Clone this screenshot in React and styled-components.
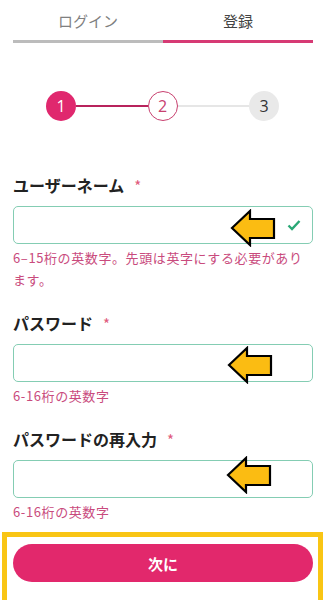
import styled, { createGlobalStyle } from "styled-components";

const GlobalStyle = createGlobalStyle`
    body {
        margin: 0;
        background: #ffffff;
        font-family: "Noto Sans CJK JP", "Noto Sans", sans-serif;
    }
`;

const Page = styled.div`
    width: 325px;
    height: 600px;
    overflow: hidden;
    display: flex;
    flex-direction: column;
`;

const Content = styled.div`
    padding: 0 12px 0 13px;
    display: flex;
    flex-direction: column;
`;

const Tabs = styled.div`
    display: grid;
    grid-template-columns: 1fr 1fr;
`;

const Tab = styled.div`
    height: 40px;
    display: flex;
    align-items: center;
    justify-content: center;
    font-size: 15px;
    color: ${(p) => (p.$active ? "#444" : "#808080")};
    border-bottom: 3px solid ${(p) => (p.$active ? "#d63a74" : "#bcbcbc")};
`;

const Stepper = styled.div`
    margin: 48px 34px 0 33px;
    display: flex;
    align-items: center;
`;

const Step = styled.div`
    width: 30px;
    height: 30px;
    flex: none;
    box-sizing: border-box;
    border-radius: 50%;
    display: flex;
    align-items: center;
    justify-content: center;
    font-family: "Open Sans", sans-serif;
    font-size: 16px;
    background: ${(p) => (p.$state === "done" ? "#e0286e" : p.$state === "current" ? "#fff" : "#e9e9e9")};
    color: ${(p) => (p.$state === "done" ? "#fff" : p.$state === "current" ? "#c8406f" : "#333")};
    border: ${(p) => (p.$state === "current" ? "1px solid #c8406f" : "none")};
`;

const StepLine = styled.div`
    flex: 1;
    height: 2px;
    background: ${(p) => (p.$active ? "#b8235c" : "#e6e6e6")};
`;

const Form = styled.div`
    margin-top: 53px;
    display: flex;
    flex-direction: column;
    gap: 21px;
`;

const Field = styled.div`
    display: flex;
    flex-direction: column;
`;

const Label = styled.div`
    font-size: 16px;
    font-weight: 700;
    line-height: 22px;
    color: #222;
    margin-bottom: 9px;

    & span {
        color: #e05a7c;
        margin-left: 10px;
        font-weight: 400;
        font-size: 15px;
    }
`;

const InputWrap = styled.div`
    position: relative;
`;

const Input = styled.input`
    box-sizing: border-box;
    width: 100%;
    height: 38px;
    border: 1px solid #84cdb3;
    border-radius: 5px;
    outline: none;
    padding: 0 30px 0 10px;
    font-size: 14px;
    background: #fff;
`;

const Check = styled.svg`
    position: absolute;
    right: 12px;
    top: 13px;
`;

const Arrow = styled.svg`
    position: absolute;
    left: ${(p) => p.$left}px;
    top: ${(p) => p.$top}px;
`;

const Help = styled.div`
    margin-top: 3px;
    font-size: 13px;
    letter-spacing: 0.6px;
    line-height: 22px;
    color: #c94b7d;
`;

const Highlight = styled.div`
    margin: 9px 2px 0 2px;
    border: 5px solid #f9c514;
    border-bottom: none;
    padding: 7px 5px 20px 6px;
`;

const NextButton = styled.button`
    width: 100%;
    height: 38px;
    border: none;
    border-radius: 19px;
    background: #e2286c;
    color: #fff;
    font-family: "Noto Sans CJK JP", sans-serif;
    font-size: 15px;
    font-weight: 700;
`;

function YellowArrow({ left, top }) {
    return (
        <Arrow $left={left} $top={top} width="46" height="38" viewBox="0 0 46 38">
            <path
                d="M2 19 L20 2 L20 10 L44 10 L44 29 L20 29 L20 36 Z"
                fill="#fbbc12"
                stroke="#000"
                strokeWidth="2.2"
                strokeLinejoin="miter"
            />
        </Arrow>
    );
}

export default function App() {
    return (
        <Page>
            <GlobalStyle />
            <Content>
                <Tabs>
                    <Tab>ログイン</Tab>
                    <Tab $active>登録</Tab>
                </Tabs>
                <Stepper>
                    <Step $state="done">1</Step>
                    <StepLine $active />
                    <Step $state="current">2</Step>
                    <StepLine />
                    <Step>3</Step>
                </Stepper>
                <Form>
                    <Field>
                        <Label>
                            ユーザーネーム<span>*</span>
                        </Label>
                        <InputWrap>
                            <Input type="text" />
                            <YellowArrow left={217} top={3} />
                            <Check width="14" height="12" viewBox="0 0 14 12">
                                <path d="M1.5 6.5 L5 10 L12.5 2" fill="none" stroke="#2aa876" strokeWidth="2.4" />
                            </Check>
                        </InputWrap>
                        <Help>6–15桁の英数字。先頭は英字にする必要があります。</Help>
                    </Field>
                    <Field>
                        <Label>
                            パスワード<span>*</span>
                        </Label>
                        <InputWrap>
                            <Input type="password" />
                            <YellowArrow left={214} top={2} />
                        </InputWrap>
                        <Help>6-16桁の英数字</Help>
                    </Field>
                    <Field>
                        <Label>
                            パスワードの再入力<span>*</span>
                        </Label>
                        <InputWrap>
                            <Input type="password" />
                            <YellowArrow left={213} top={-4} />
                        </InputWrap>
                        <Help>6-16桁の英数字</Help>
                    </Field>
                </Form>
            </Content>
            <Highlight>
                <NextButton>次に</NextButton>
            </Highlight>
        </Page>
    );
}
